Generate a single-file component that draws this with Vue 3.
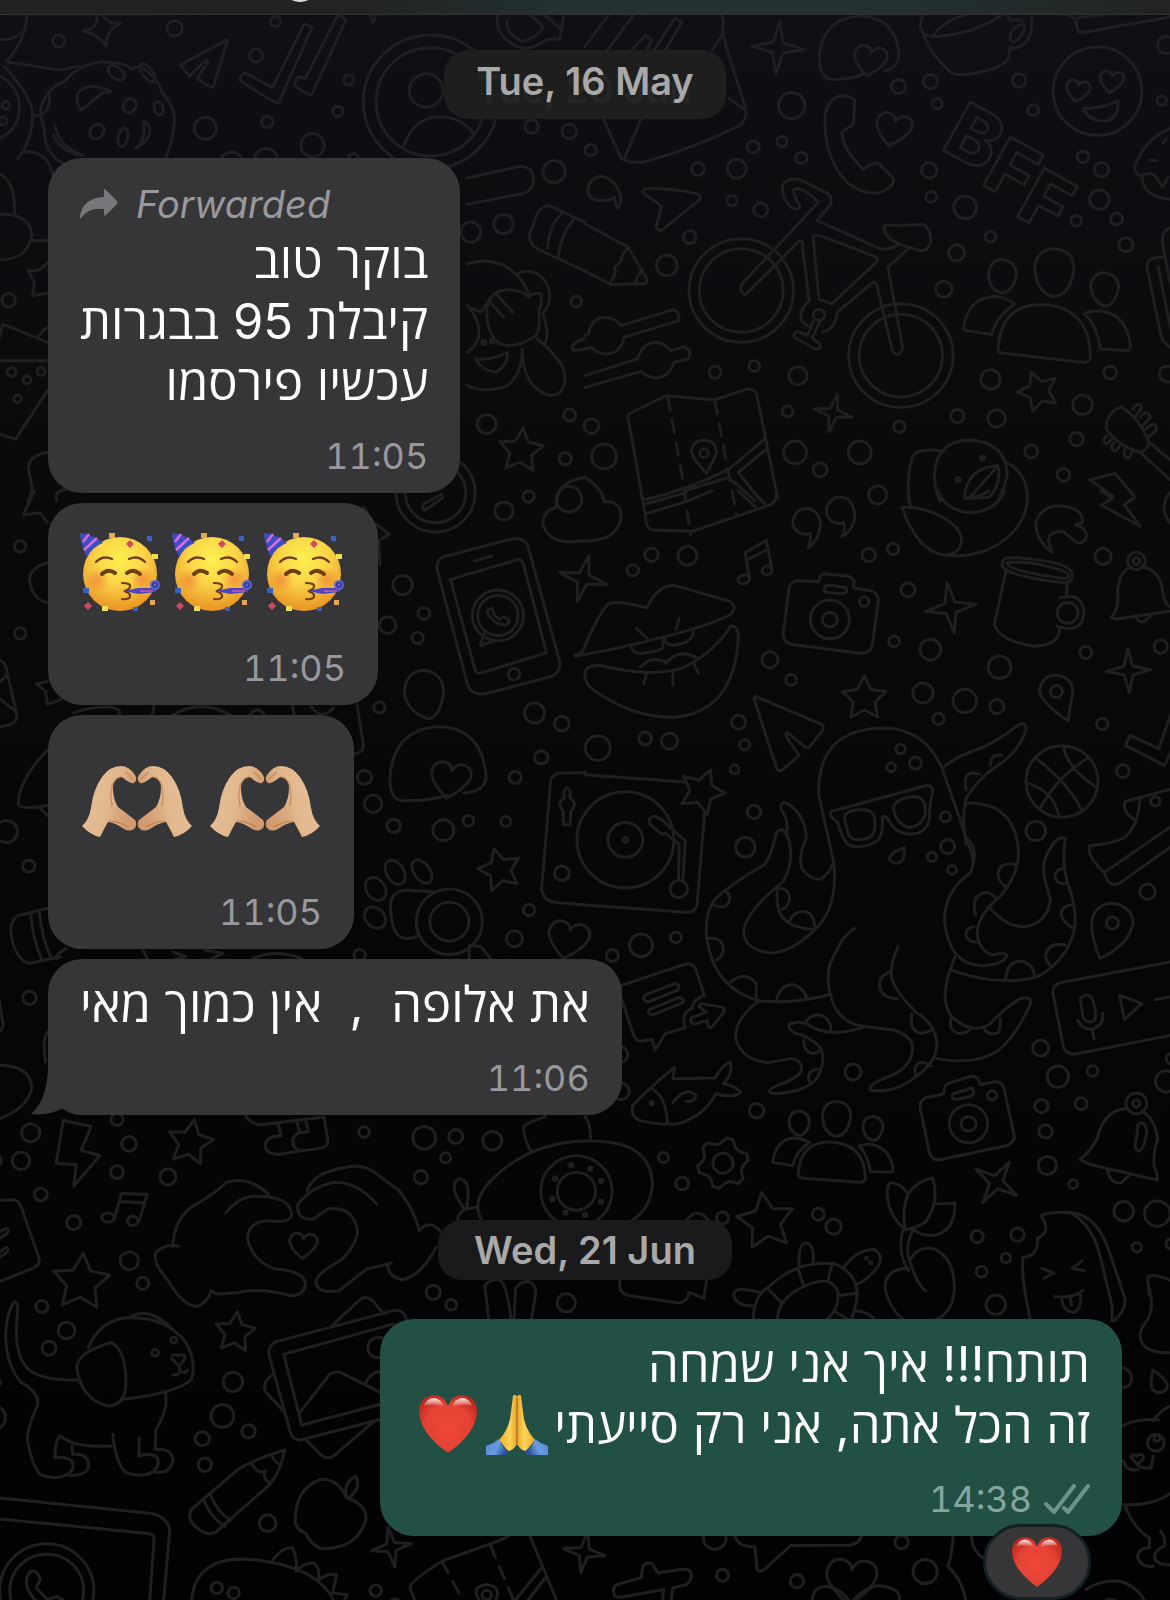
<template>
  <div class="chat-page">
    <!-- WALLPAPER -->
    <svg class="wallpaper" viewBox="0 0 1170 1600" preserveAspectRatio="xMidYMin slice" aria-hidden="true">
      <defs>
        <radialGradient id="faceFill" cx="0.5" cy="0.3" r="0.72">
          <stop offset="0" stop-color="#fdf04f" /><stop offset="0.45" stop-color="#fbd548" /><stop offset="1" stop-color="#e88f22" />
        </radialGradient>
        <radialGradient id="blush">
          <stop offset="0" stop-color="#f0803a" stop-opacity="0.7" /><stop offset="1" stop-color="#f0803a" stop-opacity="0" />
        </radialGradient>
        <linearGradient id="skin" x1="0" y1="0" x2="1" y2="0.4">
          <stop offset="0" stop-color="#e8c39b" /><stop offset="0.6" stop-color="#e2b88d" /><stop offset="1" stop-color="#d29a6f" />
        </linearGradient>
        <radialGradient id="heartFill" cx="0.5" cy="0.55" r="0.6">
          <stop offset="0" stop-color="#f0483a" /><stop offset="0.65" stop-color="#e34234" /><stop offset="1" stop-color="#c1281d" />
        </radialGradient>
        <linearGradient id="heartShine" x1="0" y1="0" x2="0" y2="1">
          <stop offset="0" stop-color="#fff" stop-opacity="0.9" /><stop offset="1" stop-color="#fff" stop-opacity="0" />
        </linearGradient>
        <linearGradient id="palm" x1="0" y1="0" x2="1" y2="0">
          <stop offset="0" stop-color="#f0a92c" /><stop offset="0.6" stop-color="#fdd458" /><stop offset="1" stop-color="#e9a52f" />
        </linearGradient>
        <linearGradient id="sleeve" x1="0" y1="0" x2="1" y2="0.4">
          <stop offset="0" stop-color="#4f86cf" /><stop offset="0.6" stop-color="#6a9be0" /><stop offset="1" stop-color="#2d4f94" />
        </linearGradient>

        <symbol id="party" viewBox="0 0 82 80">
          <circle cx="40" cy="42" r="37" fill="url(#faceFill)" />
          <circle cx="17" cy="48" r="12" fill="url(#blush)" />
          <circle cx="62" cy="47" r="12" fill="url(#blush)" />
          <path d="M0 1Q13 2 23 11Q12 15 7 25Q1 14 0 1Z" fill="#3d4fc0" />
          <path d="M3 10L9 2M4 18L17 6" fill="none" stroke="#d86be0" stroke-width="2.5" />
          <path d="M16 30Q23 23 32 27M49 27Q58 23 65 30" fill="none" stroke="#70400a" stroke-width="2.4" stroke-linecap="round" />
          <path d="M22 42Q28 36 35 41M47 41Q53 36 60 42" fill="none" stroke="#70400a" stroke-width="4" stroke-linecap="round" />
          <path d="M42 51Q51 51 50 55Q49 58 44 59Q51 61 50 65Q48 68 42 67" fill="none" stroke="#70400a" stroke-width="2.2" stroke-linecap="round" />
          <path d="M44 59L58 56L76 56L76 60L58 62Z" fill="#4a45c4" />
          <path d="M60 59H73" stroke="#c65aa0" stroke-width="1.6" />
          <circle cx="75" cy="53" r="5" fill="#5b6ad0" /><circle cx="75" cy="53" r="2.4" fill="none" stroke="#3b2f9c" stroke-width="1.4" />
          <path d="M29 1h6v5h-6zM70 68h5v5h-5z" fill="#e6a657" />
          <path d="M50 8l4 4l-4 4l-4 -4zM8 70l4 4l-4 4l-4 -4z" fill="#cf4a62" />
          <path d="M67 4h5v5h-5zM3 56h6v5h-6zM53 75h5v4h-5z" fill="#3b62bd" />
          <path d="M72 22h6v5h-6zM22 74h6v5h-6z" fill="#ecdf57" />
        </symbol>

        <symbol id="half-heart-hand" viewBox="0 0 55 72">
          <path d="M0 60Q7 54 9 42Q11 24 20 11Q28 0 39 0Q47 0 53 9Q56 14 52 17Q48 18 40 11Q31 12 31 22Q31 33 36 41Q44 47 53 54Q56 59 52 63Q48 66 42 63Q34 57 26 56Q22 63 18 71Q8 69 0 60Z" fill="url(#skin)" />
          <path d="M39 11Q32 12 30 21Q28 30 30 40M27 55Q36 55 46 61M43 6Q48 9 51 14" fill="none" stroke="#b57248" stroke-width="1.3" opacity="0.6" />
        </symbol>

        <symbol id="heart-hands" viewBox="0 0 110 72">
          <use href="#half-heart-hand" width="55" height="72" />
          <use href="#half-heart-hand" width="55" height="72" transform="translate(110 0) scale(-1 1)" />
        </symbol>

        <symbol id="red-heart" viewBox="0 0 58 58">
          <path d="M29 58Q0 37 0 16Q1 1 15 0Q25 0 29 11Q33 0 43 0Q57 1 58 16Q58 37 29 58Z" fill="url(#heartFill)" />
          <path d="M5 11Q8 3 15 3Q23 4 25 12Q14 8 5 11ZM53 11Q50 3 43 3Q35 4 33 12Q44 8 53 11Z" fill="url(#heartShine)" />
        </symbol>

        <symbol id="half-pray" viewBox="0 0 31 61">
          <path d="M27 2Q28 0 29 1L31 2V50Q27 57 22 57L13 46Q24 34 25 18Z" fill="url(#palm)" />
          <path d="M31 4V50" stroke="#9a5b10" stroke-width="1" />
          <path d="M0 52Q7 50 13 45Q16 54 23 57L21 61H0Z" fill="url(#sleeve)" />
        </symbol>

        <symbol id="pray" viewBox="0 0 62 61">
          <use href="#half-pray" width="31" height="61" />
          <use href="#half-pray" width="31" height="61" transform="translate(62 0) scale(-1 1)" />
        </symbol>
      </defs>

      <g v-for="(t, i) in tiles" :key="i" class="doodle" :transform="`translate(${t.x} ${t.y}) scale(0.3731 0.3333)`">
        <ellipse v-for="(c, j) in t.dots" :key="'c' + j" :cx="c[0]" :cy="c[1]" :rx="c[2] * 0.9" :ry="c[2]" />
        <ellipse v-for="(e, j) in t.ovals || []" :key="'e' + j" :rx="e[2]" :ry="e[3]" :transform="`translate(${e[0]} ${e[1]}) rotate(${e[4]})`" />
        <path v-for="(s, j) in t.stars || []" :key="'s' + j" :d="burst(s[0], s[1], s[2], s[3], 5, 0.5)" />
        <path v-for="(s, j) in t.sparkles || []" :key="'k' + j" :d="burst(s[0], s[1], s[2], s[3], 4, 0.28)" />
        <path v-for="(h, j) in t.hearts || []" :key="'h' + j" :d="heartPath" :transform="`translate(${h[0]} ${h[1]}) rotate(${h[3]}) scale(${h[2] / 50})`" />
        <path v-for="(d, j) in t.paths" :key="'p' + j" :d="d" />
        <path v-for="(d, j) in t.dashed || []" :key="'d' + j" class="dashed" :d="d" />
      </g>
      <g class="doodle doodle-text">
        <text transform="translate(939 148) rotate(29)">B</text>
        <text transform="translate(979 183) rotate(29)">F</text>
        <text transform="translate(1013 214) rotate(29)">F</text>
      </g>
    </svg>

    <!-- HEADER -->
    <header class="top-bar"><span class="avatar"></span></header>

    <!-- CHAT -->
    <main class="chat">
      <div class="date-pill first">
        <span class="date-ghost" aria-hidden="true">Tue, 20 Jun</span>
        <span class="date-text">Tue, 16 May</span>
      </div>

      <div class="bubble forwarded-bubble">
        <div class="forwarded">
          <svg class="forward-icon" viewBox="0 0 38 30" aria-hidden="true">
            <path d="M24 1Q24 -1 26 1L37 12Q38 13.500 37 15L26 26Q24 28 24 25V20Q9 18 1 29Q-1 30 0 27Q3 9 24 8Z" />
          </svg>
          <span>Forwarded</span>
        </div>
        <p v-for="line in forwardedLines" :key="line" class="text" dir="rtl">{{ line }}</p>
        <time class="time">11:05</time>
      </div>

      <div class="bubble">
        <div class="emoji-row party-row">
          <svg v-for="n in 3" :key="n" class="party" role="img" aria-label="🥳"><use href="#party" /></svg>
        </div>
        <time class="time">11:05</time>
      </div>

      <div class="bubble">
        <div class="emoji-row hands-row">
          <svg v-for="n in 2" :key="n" class="hands" role="img" aria-label="🫶🏼"><use href="#heart-hands" /></svg>
        </div>
        <time class="time">11:05</time>
      </div>

      <div class="bubble with-tail">
        <p class="text" dir="rtl">{{ praise }}</p>
        <time class="time">11:06</time>
        <svg class="tail" viewBox="0 0 40 50" aria-hidden="true"><path d="M17 0Q17 34 0 49Q18 51 32 43L40 20Z" /></svg>
      </div>

      <div class="date-pill second"><span class="date-text">Wed, 21 Jun</span></div>

      <div class="bubble outgoing">
        <p class="text" dir="rtl">תותח!!! איך אני שמחה</p>
        <p class="text" dir="rtl">זה הכל אתה, אני רק סייעתי<svg class="pray" role="img" aria-label="🙏"><use href="#pray" /></svg><svg class="heart" role="img" aria-label="❤️"><use href="#red-heart" /></svg></p>
        <div class="time">
          <time>14:38</time>
          <svg class="ticks" viewBox="0 0 46 30" aria-hidden="true"><path d="M2 20L10 28L30 2M20 24L24 28L44 2" /></svg>
        </div>
        <button class="reaction" type="button" aria-label="❤️"><svg><use href="#red-heart" /></svg></button>
      </div>
    </main>
  </div>
</template>

<script setup>
const forwardedLines = ['בוקר טוב', 'קיבלת 95 בבגרות', 'עכשיו פירסמו'];
const praise = 'את אלופה  ,  אין כמוך מאי';

const heartPath = 'M0 46Q-45 8 -44 -16Q-40 -46 -16 -42Q-2 -38 0 -24Q8 -44 24 -42Q46 -38 44 -12Q38 14 0 46Z';

// pointed shape with n tips: five for a star, four for a sparkle
function burst(x, y, r, rot, n, inner) {
  const pts = [];
  for (let i = 0; i < n * 2; i++) {
    const a = (rot - 90 + (i * 180) / n) * Math.PI / 180;
    const d = i % 2 ? r * inner : r;
    pts.push(`${(x + Math.cos(a) * d * 0.9).toFixed(1)} ${(y + Math.sin(a) * d).toFixed(1)}`);
  }
  return 'M' + pts.join('L') + 'Z';
}

function gear(x, y, r) {
  const pts = [];
  for (let i = 0; i < 24; i++) {
    const a = (i * 15 - 82) * Math.PI / 180;
    const d = i % 4 < 2 ? r : r * 0.78;
    pts.push(`${(x + Math.cos(a) * d * 0.9).toFixed(1)} ${(y + Math.sin(a) * d).toFixed(1)}`);
  }
  return 'M' + pts.join('L') + 'Z';
}

const tiles = [
  {
    x: 0, y: 0,
    dots: [[160, 123, 18], [470, 85, 23], [740, 65, 15], [688, 166, 20], [936, 239, 15], [907, 333, 15], [718, 365, 17], [552, 384, 33], [839, 435, 35], [1425, 379, 20], [1526, 393, 22], [1485, 514, 33], [1350, 671, 29], [1262, 695, 30], [26, 899, 20], [19, 315, 11], [11, 362, 12], [34, 1114, 13], [75, 1137, 12], [113, 1112, 12], [50, 1194, 11], [1305, 1270, 28], [1527, 1243, 18], [1515, 1374, 18], [1545, 903, 16], [1143, 271, 50], [1155, 305, 200], [1155, 305, 162], [715, 480, 35], [622, 490, 35], [948, 475, 15], [1525, 1495, 38], [1297, 1025, 6], [1320, 1022, 6]],
    ovals: [[350, 317, 17, 22, 20], [427, 324, 12, 20, -15], [262, 394, 18, 23, 30], [332, 412, 13, 28, 10], [314, 218, 26, 16, 45], [398, 218, 32, 14, 55]],
    stars: [[1397, 1350, 68, 5]],
    paths: [
      'M75 44Q72 120 20 185M0 118Q40 122 62 95M20 185L165 210L215 198M15 200Q90 290 90 345Q90 420 50 475M0 225Q55 260 55 320Q55 390 0 415',
      'M90 345H112M70 455Q130 450 145 525M0 520Q45 540 42 645M0 642Q85 640 88 705Q75 780 0 778M88 720H130',
      'M125 290Q150 250 175 245Q215 190 275 186Q330 185 355 205L380 198Q430 240 435 275Q470 320 470 360Q465 430 445 473M125 290Q100 330 122 385Q118 460 180 495M135 280Q140 330 112 345M150 375Q160 440 225 465Q170 460 145 405M388 360Q430 400 365 445Q395 420 388 360M300 275L275 280L220 330Q195 285 225 265Q260 250 300 275Z',
      'M262 44Q268 85 225 92Q265 103 287 138Q287 90 325 70Q290 72 277 44',
      'M608 120Q613 118 611 125L573 262Q570 265 530 235L560 185Q555 175 545 190L510 228L485 195Z',
      'M658 218L732 262L815 75Q820 70 838 82L748 308Q742 314 645 240Q645 225 658 218ZM800 230L820 235L905 48Q915 46 928 60L837 283Q832 290 790 255Z',
      'M992 44L1000 70L1010 44M1335 44Q1325 90 1360 120Q1400 160 1440 135Q1470 110 1500 120L1512 44M1360 60Q1350 95 1400 125Q1450 105 1455 80Q1440 60 1420 44M1460 44L1505 90',
      'M1082 440Q1110 350 1180 350Q1235 350 1270 400M1253 533L1395 498Q1430 500 1430 540Q1430 570 1400 580L1253 612',
      'M1568 665L1475 617Q1455 612 1440 640L1420 700Q1415 725 1440 745L1568 812M1505 640Q1470 680 1468 745M1540 655Q1505 695 1497 765',
      'M1253 790Q1310 770 1360 800Q1400 830 1420 885Q1435 875 1450 880Q1455 900 1445 930Q1450 1000 1430 1010Q1380 1045 1340 1030Q1305 1000 1305 930Q1310 880 1345 870Q1385 860 1420 890M1385 820Q1430 800 1460 840Q1490 890 1455 940Q1475 1000 1460 1030M1400 1045Q1400 1130 1440 1165Q1480 1200 1505 1170Q1530 1120 1490 1070Q1470 1040 1440 1015M1400 1045Q1400 1120 1360 1155Q1300 1180 1253 1155M1253 915Q1290 960 1283 1010Q1275 1040 1253 1055M1275 1075Q1320 1080 1360 1055Q1365 1090 1330 1115Q1290 1110 1275 1075ZM1310 900L1350 950M1330 880L1375 935M1258 920L1290 935L1310 900',
      'M130 785Q110 820 78 808L95 845L90 885L130 878M0 1015L10 970L130 1025M0 1080H130M0 1300L45 1315L130 1170M105 1010Q115 990 130 980M130 1355Q85 1360 78 1400L90 1465L78 1500M155 1500Q145 1470 180 1465',
      'M1568 1015Q1520 1030 1540 1050L1568 1045',
    ],
  },
  {
    x: 585, y: 0,
    dots: [[839, 259, 21], [924, 244, 21], [942, 311, 15], [1161, 241, 20], [1199, 330, 16], [553, 316, 39], [450, 440, 18], [527, 424, 15], [579, 473, 17], [302, 506, 19], [406, 505, 28], [15, 450, 17], [393, 601, 15], [470, 629, 21], [280, 710, 19], [219, 795, 31], [921, 510, 23], [926, 590, 16], [1017, 621, 34], [1085, 709, 16], [994, 757, 24], [960, 866, 24], [1332, 470, 17], [1382, 508, 21], [1376, 598, 29], [1314, 661, 16], [1422, 656, 18], [1447, 733, 21], [1555, 135, 26], [1543, 301, 14], [1371, 273, 132], [348, 1115, 18], [453, 1096, 16], [570, 1125, 27], [1085, 1136, 29], [1405, 1116, 19], [1558, 1120, 24], [1331, 1212, 29], [996, 1246, 20], [1101, 1253, 26], [542, 1232, 16], [562, 1355, 34], [735, 1355, 34], [629, 1407, 21], [841, 1278, 17], [17, 1276, 22], [51, 1367, 37], [1315, 1315, 20], [1194, 1352, 19], [1280, 1422, 19], [1064, 1371, 6], [998, 1437, 6], [626, 943, 17], [418, 870, 155], [418, 870, 125], [845, 1065, 155], [845, 1065, 124], [318, 1357, 13]],
    stars: [[1213, 1172, 62, -20]],
    sparkles: [[516, 143, 78, 4], [664, 1237, 58, 12]],
    hearts: [[762, 182, 50, 10], [824, 388, 54, 14], [1318, 272, 36, 10], [1408, 245, 36, 8]],
    paths: [
      'M0 140Q30 90 65 44M60 150L130 44M365 44Q375 70 365 110L340 150M370 100L380 150L430 325Q435 355 415 375Q300 440 160 485Q110 490 95 470L50 357M105 475L150 357M385 295L430 330M125 150L162 105L178 120L165 150M185 150L240 55L260 65L215 150',
      'M800 212Q840 205 840 160Q830 50 735 48Q640 55 627 160Q625 240 665 238Q720 238 750 218',
      'M905 44Q880 105 935 110Q1050 100 1115 44M930 108Q960 60 1020 44M905 105Q930 170 980 218Q1010 230 1060 215Q1120 200 1132 175L1138 140M1132 44Q1138 70 1145 60Q1180 55 1175 90Q1150 145 1136 115Q1140 80 1165 75M1195 44Q1200 145 1138 145',
      'M1290 44L1310 55L1320 95Q1330 100 1345 95L1568 50M1310 55L1390 44',
      'M1332 325Q1380 325 1425 303Q1430 350 1395 362Q1350 365 1332 325Z',
      'M722 300Q700 280 675 290Q640 310 642 360Q640 470 700 545Q750 590 795 575Q830 555 825 535L785 488Q770 485 745 508Q690 450 687 395L718 372Z',
      'M158 565Q150 575 165 585L205 618L190 680Q195 692 205 690L305 600Q315 590 300 580Q230 563 158 565ZM35 600Q5 595 8 565Q15 530 45 528Q90 540 97 600L88 625Q80 610 78 590Q65 605 35 600Z',
      'M0 670L115 740L165 835Q168 850 155 850L70 852L0 812M115 742Q105 752 98 770Q100 785 80 800Q85 825 65 848M155 808Q140 820 133 850',
      'M625 605L420 850Q410 875 430 882L575 720Q585 720 582 740L600 900M625 605Q570 550 558 570Q560 590 575 615Q570 635 550 620Q515 570 535 545Q555 530 580 540L650 580Q665 595 655 615L620 660L790 745Q810 750 835 735M610 710Q615 700 640 710L780 770Q785 780 775 790L660 910L626 896Z',
      'M865 745L810 800L850 1040Q845 1065 830 1060Q822 1055 820 1040L780 850Q770 840 760 855L675 935Q670 985 635 995M600 900Q570 930 580 960Q590 975 605 980M800 680Q795 672 830 675L905 672Q925 685 925 720Q920 755 895 750L850 735Q800 715 800 680ZM610 965L595 1005L570 992Q555 1000 560 1010L615 1045Q635 1045 628 1030L608 1012L630 960',
      'M0 1005L10 1000Q15 950 55 950Q85 955 95 975L235 928Q255 930 250 960L105 1010Q95 1060 55 1060Q30 1058 18 1040L0 1045M0 1125L140 1075Q155 1025 190 1025Q215 1030 230 1050L265 1038Q290 1050 275 1075L238 1085Q225 1130 190 1132Q165 1130 150 1112L0 1160',
      'M1255 745Q1310 750 1308 810Q1295 890 1250 888Q1205 870 1203 800Q1210 745 1255 745ZM1105 1050Q1110 910 1225 912Q1350 920 1352 1070Q1350 1088 1330 1085L1120 1058Q1102 1055 1105 1050ZM1115 777Q1160 785 1153 830Q1140 878 1112 878Q1080 865 1079 820Q1085 777 1115 777ZM1012 985Q1025 890 1095 888Q1130 890 1150 912Q1100 945 1088 1002L1018 990ZM1390 817Q1430 825 1427 865Q1415 918 1388 917Q1355 900 1353 855Q1360 815 1390 817ZM1335 940Q1350 930 1385 932Q1450 945 1459 1035Q1460 1052 1445 1050L1378 1045Q1370 970 1335 940Z',
      'M155 1500L115 1250Q115 1240 125 1235L218 1185L345 1198L435 1165Q458 1165 460 1185L515 1490M155 1498Q280 1465 385 1405L480 1315M270 1468L385 1430L455 1500M485 1345L410 1415L470 1500M325 1418Q285 1370 285 1350Q290 1318 320 1318Q352 1322 352 1355Q348 1370 325 1418Z',
      'M865 1500Q860 1350 900 1350Q930 1345 960 1352M950 1500Q935 1470 935 1420Q940 1320 1030 1318Q1125 1325 1130 1420Q1120 1470 1105 1500M1130 1385Q1185 1420 1184 1500M1015 1493Q1020 1400 1105 1395Q1115 1450 1080 1490ZM1105 1395L1030 1490',
      'M1435 1218Q1390 1240 1395 1285Q1420 1330 1485 1355Q1510 1345 1508 1320Q1480 1250 1435 1218ZM1485 1355L1568 1440M1510 1325L1568 1380M1465 1225Q1480 1200 1490 1220L1475 1245M1485 1250Q1505 1220 1512 1250L1492 1275M1500 1285Q1530 1255 1528 1290L1505 1310M1395 1305Q1380 1320 1395 1330L1410 1315M1415 1325Q1400 1345 1420 1350L1430 1335M1445 1345Q1435 1370 1455 1372L1465 1352',
      'M1400 1500L1412 1485L1350 1437L1418 1418L1470 1487L1460 1500',
      'M1568 385Q1500 410 1470 500Q1475 530 1490 525Q1520 510 1530 535L1545 560L1560 530M1490 527Q1490 590 1568 597M1510 480H1530M1545 430L1555 415M1568 682Q1540 690 1545 730L1568 860M1550 768L1515 775Q1500 785 1505 810L1540 1000Q1545 1030 1568 1040M1533 800L1568 990',
    ],
    dashed: ['M222 1190L262 1440L282 1600', 'M347 1200L405 1540'],
  },
  {
    x: 0, y: 490,
    dots: [[57, 166, 17], [57, 427, 17], [1080, 282, 29], [1351, 60, 27], [1417, 17, 17], [1137, 367, 18], [1040, 402, 25], [1120, 440, 17], [1018, 648, 17], [1433, 665, 30], [1506, 697, 22], [1451, 798, 20], [1381, 858, 18], [978, 858, 21], [1001, 937, 26], [1056, 1003, 20], [1189, 1016, 31], [1256, 988, 16], [1356, 990, 15], [80, 1123, 18], [20, 1020, 33], [1418, 1255, 17], [1379, 1341, 24], [965, 1390, 17], [1335, 373, 76], [1335, 373, 60], [1378, 549, 17], [1205, 1290, 98], [1205, 1290, 58], [1168, 5, 118], [1168, 5, 90], [1506, 1145, 22]],
    ovals: [[1060, 1142, 24, 38, -25], [1132, 1140, 22, 38, -30], [1008, 1192, 26, 36, -25], [1006, 1278, 26, 34, -30]],
    stars: [[1340, 1135, 66, -15]],
    hearts: [[1207, 866, 60, 10], [1522, 1345, 62, 12]],
    paths: [
      'M1172 235Q1170 205 1190 197L1375 143Q1405 140 1415 165L1500 510Q1505 540 1480 555L1300 608Q1265 612 1255 585ZM1208 265L1390 205Q1398 205 1402 215L1465 485L1290 545Q1280 548 1275 540ZM1272 210L1318 195M1300 420L1288 463L1325 450M1320 352Q1300 355 1312 375Q1330 400 1355 402Q1370 395 1362 382L1348 378L1340 385L1325 372Z',
      'M1185 10L1135 40Q1130 50 1140 58L1188 20M1568 -40Q1490 -30 1490 50Q1455 60 1455 100Q1470 150 1520 152L1568 150',
      'M1137 537Q1190 545 1190 605Q1180 680 1147 682Q1090 660 1084 600Q1090 540 1137 537ZM1245 905Q1305 900 1303 850Q1290 705 1172 706Q1055 715 1046 860Q1045 930 1085 928Q1150 928 1200 912',
      'M1160 1200L1090 1195Q1045 1200 1048 1250Q1050 1340 1090 1340Q1115 1340 1122 1330M1260 1360L1290 1365L1315 1400M1258 1365V1400',
      'M975 50Q985 55 990 85L1045 130L1015 150L1020 220M130 775Q50 870 52 940Q60 955 130 942M110 950L130 972M130 1250L50 1272Q30 1290 32 1320Q40 1400 80 1415L165 1395M85 1265Q90 1340 115 1405M108 1260Q115 1340 140 1400',
      'M0 505Q20 515 22 545L48 670Q50 690 30 700L0 708M0 620L45 660M0 575L22 550M130 570L100 578L125 600L130 640L165 625M130 215Q80 230 82 270Q90 325 130 335M95 0L65 72L110 65L130 95',
      'M200 665Q240 645 300 647Q330 655 322 672M410 672L415 645M465 672Q540 620 620 672M670 672Q690 640 712 672M785 645L790 672M835 645Q860 690 895 650M958 640L975 760Q975 785 950 788M465 1380L500 1395L475 1400M550 1375L600 1385L570 1400M680 1400Q740 1370 810 1400M385 1375L397 1400M155 1400Q150 1390 180 1370',
      'M1568 843L1500 845Q1478 850 1476 870L1452 1190Q1455 1225 1485 1232L1568 1240M1512 900V920Q1490 935 1510 960V1000H1528L1530 960Q1550 935 1528 920V900Q1520 880 1512 900Z',
    ],
  },
  {
    x: 585, y: 490,
    dots: [[128, 238, 17], [178, 191, 20], [274, 194, 28], [759, 192, 20], [824, 174, 17], [864, 296, 21], [827, 451, 16], [924, 475, 31], [1109, 528, 34], [904, 605, 30], [1016, 629, 35], [1102, 646, 21], [946, 683, 17], [495, 506, 24], [551, 566, 16], [411, 693, 21], [427, 760, 15], [400, 834, 13], [161, 741, 19], [226, 749, 24], [34, 770, 37], [452, 961, 20], [429, 1067, 29], [1386, 196, 24], [1340, 484, 18], [1540, 466, 20], [1384, 698, 17], [1439, 839, 19], [1206, 1018, 29], [1505, 1200, 23], [1411, 1294, 18], [150, 1361, 34], [243, 1337, 16], [73, 1391, 18], [844, 773, 14], [884, 815, 18], [819, 828, 13], [964, 976, 15], [970, 1065, 21], [928, 1096, 14], [982, 1135, 13], [1261, 601, 18], [783, 12, 27], [1276, 870, 107], [1475, 210, 26], [1475, 210, 10], [655, 385, 58], [655, 385, 22], [747, 332, 14], [1291, 365, 31], [108, 1045, 144], [108, 1045, 52], [108, 1045, 7], [251, 1192, 26], [1526, 930, 14]],
    ovals: [[425, 265, 16, 13, -20], [487, 238, 13, 13, 0]],
    stars: [[747, 622, 68, 0], [312, 900, 70, 22]],
    sparkles: [[978, 350, 76, -8], [1454, 538, 66, -2], [-5, 262, 72, 14]],
    paths: [
      'M0 -40Q45 -10 52 32Q95 30 97 75Q90 150 0 150M150 0L165 100Q170 118 190 118L290 120L495 42Q515 35 512 0M160 40L270 5M165 68L275 30L340 0M410 0L455 48M450 0L480 38',
      'M590 130Q555 125 556 90Q565 50 595 52Q630 60 630 105Q625 150 597 170Q605 150 603 128ZM680 98Q645 92 646 55Q655 18 685 18Q720 25 722 75Q718 120 687 137Q698 120 692 95Z',
      'M440 260L428 185L485 148L500 235M432 207L490 175',
      'M848 50Q900 45 950 75Q1010 110 1007 150Q1005 190 960 192Q890 180 848 50ZM960 192Q1060 205 1130 140Q1190 80 1183 0M943 0Q970 65 1035 65Q1100 60 1122 0M870 45L865 0M1015 20Q1050 22 1080 0',
      'M1250 185Q1200 140 1207 90Q1225 40 1280 45Q1335 55 1330 95L1312 102Q1340 110 1343 135Q1335 160 1315 155L1280 122Q1240 120 1240 150Z',
      'M1380 0L1412 22L1380 42L1485 105L1443 42L1470 18L1460 0M1568 0Q1530 50 1568 100',
      'M-27 490Q-10 495 0 465Q30 380 60 340Q80 325 165 350Q195 280 240 283L385 330Q410 345 390 370Q330 405 200 440Q80 475 -27 495M0 560Q-5 520 40 523Q180 560 260 530Q340 490 390 405Q410 400 410 440Q400 660 240 678Q120 680 10 585Z',
      'M120 460Q130 490 150 487Q200 480 208 470L210 445M212 440Q215 462 235 462Q290 455 290 420M138 412L165 440M252 382L243 415M148 528Q180 490 218 515Q250 470 300 500M165 545L157 578M235 545V580M290 515L303 545',
      'M625 272L570 268Q548 270 545 295L530 430Q532 455 555 460L735 486Q762 487 768 465L785 325Q782 300 760 298L718 290L720 270Q715 258 700 255L640 248Q628 250 625 272ZM642 285Q635 303 650 305L690 308Q705 305 698 290L655 282Z',
      'M1120 205Q1130 195 1200 205Q1290 215 1303 245Q1308 275 1280 275Q1130 255 1115 225ZM1128 215Q1200 205 1290 245Q1300 265 1280 262Q1130 240 1128 215ZM1127 235L1095 400Q1110 450 1200 465Q1270 465 1270 410M1290 280L1287 318M1270 320Q1330 300 1335 365Q1330 430 1262 405',
      'M1460 228Q1425 245 1425 310Q1430 350 1408 378Q1410 385 1430 382L1568 360M1490 225Q1540 240 1545 300Q1550 340 1568 350M1475 378Q1490 410 1515 370',
      'M455 615L635 700Q640 710 635 718L600 768Q595 772 590 768L540 722Q535 728 540 738L573 793L525 838Q515 838 512 828L452 622Z',
      'M1292 688Q1215 630 1216 595Q1225 550 1262 552Q1305 560 1305 600ZM1568 665L1535 772L1458 732L1446 762L1550 822L1568 780M1205 800Q1290 870 1328 955M1280 765Q1290 830 1365 885M1345 800Q1260 860 1218 950M1185 875Q1255 900 1268 975',
      'M0 850L265 872M320 965L300 1235Q298 1262 270 1262L0 1240M250 1165L252 1058L215 1025L205 1028L175 1000Q165 985 180 975Q195 970 230 1010L268 1048L262 1165',
      'M625 910Q620 710 805 710Q910 715 955 830L1030 1070Q1045 1120 1030 1145Q960 1200 962 1290Q975 1425 1070 1422Q1125 1415 1128 1390Q1120 1380 1090 1390Q1045 1370 1050 1310Q1060 1260 1110 1215Q1160 1150 1160 1080Q1150 930 1020 935',
      'M625 910L665 1110Q680 1250 610 1320Q540 1390 490 1383Q420 1370 425 1310Q440 1250 530 1170Q565 1100 540 1030Q525 1000 510 1030Q500 1090 480 1120Q400 1170 350 1220Q320 1260 325 1330M540 1030Q545 980 525 955Q520 930 540 935Q590 970 592 1040Q570 1090 580 1130Q600 1165 630 1163Q650 1150 662 1120',
      'M955 830Q1000 790 1060 770Q1110 745 1160 700Q1180 690 1180 715Q1165 770 1120 810Q1050 860 1020 920Q1005 980 1020 1060M1080 1245Q1130 1310 1180 1305Q1240 1290 1245 1220Q1215 1130 1235 1090Q1260 1030 1285 1040Q1275 1110 1290 1170Q1320 1260 1308 1320Q1290 1400 1220 1450Q1180 1468 1130 1466',
      'M345 1240Q380 1260 388 1220Q385 1205 378 1200M330 1340Q370 1335 370 1375Q365 1400 350 1405M515 1190Q550 1190 547 1225Q540 1250 528 1252M515 1190Q505 1290 570 1305Q590 1315 615 1312M545 1290Q570 1245 600 1265Q615 1280 615 1312M1020 895Q1010 850 1035 845L1055 848M1085 820Q1085 785 1115 792M1150 1118Q1110 1110 1105 1145Q1105 1170 1125 1185M1045 1270Q1030 1210 1075 1202Q1095 1210 1100 1220M1040 1305Q1015 1310 1020 1335Q1030 1355 1050 1350M1280 1130Q1255 1135 1257 1160Q1270 1180 1285 1175M1300 1240Q1270 1245 1275 1275Q1290 1305 1308 1308M1285 1360Q1240 1350 1232 1390Q1235 1415 1245 1420M1125 1460Q1130 1410 1165 1408Q1200 1415 1203 1455M1025 1045Q1050 1070 1038 1120M722 1310Q690 1330 672 1380',
      'M658 960L915 882Q930 880 930 905Q925 915 922 960Q925 1010 890 1025Q840 1035 820 1000Q805 970 795 975Q800 1030 780 1050Q730 1080 700 1055Q685 1030 675 990Q650 975 658 960ZM695 985Q690 960 730 955Q775 950 775 985Q780 1035 750 1042Q715 1050 705 1030ZM825 950Q830 920 880 915Q915 915 910 970Q900 1005 865 1008Q830 995 825 950ZM853 1068Q860 1115 830 1115Q800 1105 830 1080Z',
      'M1568 893L1445 930Q1435 960 1470 985M1485 920Q1480 1010 1440 1040Q1400 1060 1350 1062Q1340 1090 1390 1145Q1400 1190 1430 1175L1568 1065M1390 1142L1568 1005M1378 1400Q1350 1330 1357 1280Q1370 1235 1412 1235Q1465 1245 1466 1295Q1455 1360 1378 1400Z',
    ],
  },
  {
    x: 0, y: 940,
    dots: [[82, 168, 20], [85, 572, 27], [59, 656, 26], [-8, 656, 16], [316, 532, 18], [348, 605, 22], [316, 690, 19], [452, 704, 24], [112, 757, 19], [200, 841, 21], [349, 955, 27], [385, 1023, 18], [1138, 587, 34], [1222, 583, 21], [1320, 596, 28], [1195, 647, 15], [1129, 705, 20], [977, 570, 16], [1545, 747, 106], [1545, 747, 57], [1531, 669, 5], [1488, 709, 5], [1481, 770, 5], [1516, 811, 5], [1162, 1050, 21], [1210, 1087, 16], [1518, 1081, 27]],
    ovals: [[292, 826, 17, 14, 0], [358, 836, 14, 14, 0]],
    stars: [[512, 602, 70, 10], [220, 1020, 88, 4]],
    hearts: [[814, 910, 42, 4]],
    paths: [
      'M0 370Q85 370 88 440Q75 500 0 530M0 170L12 250Q5 270 0 272M130 270Q115 290 125 360M172 535L247 553L220 625L270 640L200 732L207 668L153 663ZM310 825L328 753L397 757L375 835M322 778L390 782',
      'M660 520Q670 545 700 548L870 525L880 600Q878 615 860 618L745 637Q710 635 713 605Q720 580 755 582L748 545M795 535L805 570Q780 585 788 610Q795 625 810 625M820 532L828 568L805 572',
      'M465 912Q470 830 515 795Q570 760 610 720Q670 700 722 757M607 812Q640 765 680 762Q785 760 783 820Q775 845 720 835Q665 840 665 890Q680 960 740 980Q810 985 820 1020Q820 1060 780 1060Q700 1035 640 1050L585 1055L568 1045Q560 1080 530 1092Q490 1090 450 1010Q410 960 420 930Q450 900 480 912',
      'M825 745Q840 690 930 675Q980 665 1010 695L1070 745Q1110 800 1125 865Q1150 830 1180 865M1010 785Q960 720 900 720Q840 730 800 785Q795 835 840 830L880 800Q950 790 960 870Q945 940 890 970Q845 1000 848 1025Q860 1055 910 1045Q960 1000 985 980L1050 962M1040 965Q1040 1005 1080 1012Q1130 1000 1170 915',
      'M0 775L40 772Q55 778 60 795L108 950Q110 970 90 978L0 1018M0 870L20 858Q30 865 20 875L0 890M0 930L20 915Q30 925 15 935L0 945',
      'M1425 632Q1400 580 1405 550Q1420 540 1460 525V518M1568 597Q1430 600 1330 700Q1260 770 1290 832M1245 800Q1200 730 1230 710Q1265 710 1252 795M1278 795L1250 800Q1225 815 1228 832',
      'M1310 1130L1300 1030Q1310 1010 1340 1012Q1360 1030 1370 1130M1378 1130L1382 1040Q1395 1015 1420 1018Q1440 1030 1435 1060L1425 1130',
    ],
  },
  {
    x: 585, y: 940,
    dots: [[717, 390, 24], [459, 506, 22], [210, 646, 15], [260, 724, 19], [368, 827, 18], [624, 816, 18], [665, 853, 23], [1219, 318, 24], [1265, 404, 32], [1358, 387, 16], [1221, 492, 20], [1327, 485, 18], [1232, 568, 20], [1237, 670, 27], [1306, 726, 13], [1441, 807, 29], [1531, 814, 38], [1157, 877, 20], [1049, 883, 18], [1126, 947, 14], [1061, 988, 16], [1099, 1087, 29], [1476, 915, 14], [1568, 350, 15], [1555, 418, 32], [93, 338, 24], [96, 448, 25], [1026, 545, 57], [1026, 545, 22], [1089, 460, 14], [1475, 484, 31], [1475, 484, 11], [178, 483, 5], [369, 663, 30], [753, 948, 3], [765, 961, 3], [1568, 905, 15], [14, 680, 5], [43, 716, 5], [43, 778, 5], [0, 818, 5]],
    stars: [[484, 838, 88, -8]],
    sparkles: [[1100, 720, 72, 33]],
    paths: [
      gear(369, 663, 76),
      'M100 130Q90 140 93 155L130 280Q140 305 165 295L180 292L187 325L215 275L268 258Q255 215 285 200Q290 170 320 160L295 80Q285 60 265 68ZM160 160L240 125Q258 130 248 145L170 180Q150 178 160 160ZM172 203L250 167Q268 170 262 182L182 218Q165 218 172 203ZM285 228L325 210L305 195Q305 183 320 187L365 195Q375 200 372 210L340 255Q325 262 328 235L292 247Q278 240 285 228Z',
      'M128 490Q170 440 240 375L235 410L348 408Q370 365 390 360Q395 400 370 425Q400 430 417 450Q400 470 350 455Q320 520 250 545Q200 550 145 535Q120 520 128 490ZM180 440Q220 470 220 545M235 482Q270 430 297 460Q295 480 270 478',
      'M672 478Q712 482 711 525Q702 584 669 582Q637 570 635 520Q640 478 672 478ZM570 700Q574 598 657 600Q748 605 750 708Q748 722 735 720L580 708ZM573 507Q602 512 600 545Q592 580 572 580Q546 570 546 538Q550 507 573 507ZM502 660Q512 590 560 588Q585 590 601 602Q565 625 556 671ZM770 523Q799 528 797 557Q788 596 768 595Q744 583 743 550Q748 523 770 523ZM733 612Q750 605 765 607Q815 615 824 680Q825 690 815 690L764 688Q755 635 733 612Z',
      'M960 455L910 468Q893 478 897 500L922 635Q928 655 950 653L1130 610Q1150 600 1148 580L1120 435Q1112 417 1092 420L1058 428L1050 408Q1040 400 1025 405L970 425Q960 432 960 455ZM985 455Q978 475 995 472L1035 462Q1045 450 1035 438Z',
      'M1450 500Q1390 500 1370 590Q1350 630 1325 652Q1340 665 1400 680L1530 713Q1535 705 1522 670Q1520 630 1532 590Q1525 530 1490 508M1398 685Q1405 725 1435 722L1455 700M1480 545Q1500 535 1503 570Q1495 625 1482 627Q1465 620 1475 590Z',
      'M1568 60L1270 123Q1250 130 1252 155L1280 315Q1285 337 1310 337L1568 280M1325 170Q1350 145 1360 180Q1372 225 1360 238Q1340 245 1332 225ZM1318 235Q1330 262 1355 262Q1390 250 1385 215M1357 262L1362 290M1430 160L1490 185L1443 233ZM1525 173L1568 165',
      'M325 -20Q340 140 470 178L535 180Q600 175 655 158M672 30Q640 80 655 150Q670 240 740 252L830 265Q885 290 875 330Q870 375 820 400Q750 430 765 445Q830 455 890 400Q950 350 940 290Q930 240 890 215Q810 130 820 80Q825 40 838 15M980 85Q1060 118 1130 116M990 45Q930 200 1005 245Q1040 270 1080 250Q1120 200 1165 170Q1200 160 1190 190Q1150 290 1100 330Q1040 370 940 350M465 178Q400 230 403 290Q420 355 490 362L550 350Q585 355 578 390Q560 415 510 432Q480 450 505 455Q590 450 620 410Q650 350 625 310Q590 280 565 275Q535 255 550 245Q580 235 600 250Q650 290 750 255',
      'M590 240Q620 200 650 235Q660 250 657 270M585 295Q585 330 610 335L632 325M600 418Q590 385 625 382M875 215Q865 265 900 275L928 265M885 400Q875 365 905 360L925 372M980 225Q970 265 1000 275Q1020 275 1030 262M1068 260Q1080 285 1105 272Q1115 255 1110 230M820 90Q785 100 788 135Q795 170 835 170M390 120Q430 85 458 125V165M512 178Q520 130 555 128Q590 140 593 172',
      'M858 863Q810 820 808 750Q812 715 825 722Q850 730 865 755Q890 715 930 707Q950 780 910 840Q890 855 858 863Q845 810 865 755M935 785L990 783Q990 870 930 880Q900 880 880 862M850 865Q835 930 865 985M878 862Q850 920 875 975Q890 1030 912 1045M872 950Q890 910 935 920Q990 950 988 1040Q985 1110 940 1130M865 978Q800 980 803 1040Q815 1100 850 1130',
      'M450 1140Q450 1060 490 1035Q570 950 670 965Q740 1000 725 1085L710 1140M515 1140Q510 1070 590 1030Q660 995 677 1050Q680 1110 635 1140M490 1040L525 1080M570 980L585 1030M660 968L650 1015M675 1060L730 1052M665 1105L710 1135M573 970Q570 905 590 902Q615 905 610 960M692 975Q730 920 775 922Q800 940 785 970Q760 1010 728 1025M470 1050Q400 1030 398 1055Q400 1090 450 1090M725 1105Q760 1110 773 1130',
      'M0 597Q180 590 180 730Q175 800 125 835M0 525Q15 540 15 597M93 1014V1035Q95 1055 120 1060L250 1082Q275 1080 278 1050L318 1068L325 1014M272 834Q300 790 330 834',
      'M1220 820Q1245 805 1310 812Q1370 825 1400 920L1445 1070Q1445 1110 1415 1135M1300 812Q1360 850 1380 950L1410 1090V1135M1220 820Q1250 870 1210 888Q1215 940 1172 945Q1165 1000 1192 1135M1222 978L1255 992L1228 1007M1330 955L1303 978L1335 985M1257 1062Q1300 1070 1332 1045M1275 1068Q1280 1110 1310 1110Q1330 1095 1325 1055M1297 1065L1302 1088M1568 1015Q1520 990 1505 1005L1510 1060',
    ],
  },
  {
    x: 0, y: 1290,
    dots: [[115, 42, 18], [181, 114, 25], [134, 167, 21], [626, 268, 29], [598, 370, 34], [668, 416, 20], [544, 438, 21], [551, 516, 20], [719, 691, 25], [583, 885, 17], [628, 900, 17], [1008, 893, 17], [418, 181, 10], [468, 143, 9], [128, 893, 140], [128, 893, 110], [-5, 270, 10], [1305, 906, 14], [-15, 375, 36], [1060, 935, 17], [1015, 165, 31]],
    stars: [[632, 120, 62, 6]],
    sparkles: [[1050, 763, 60, -10]],
    paths: [
      'M215 262Q120 265 85 235Q40 200 48 80Q55 30 42 27Q20 60 18 130Q20 220 60 270Q110 300 103 340Q70 420 78 450Q90 520 110 545Q150 565 185 545Q210 520 190 500Q170 490 150 495Q150 440 165 430Q200 465 300 460M195 460L198 485Q240 480 240 520Q235 550 190 548M305 425Q310 500 335 535Q375 560 415 535Q435 510 420 490Q400 480 375 490V435M445 300Q455 350 420 410L418 470Q460 465 466 500Q460 545 418 538',
      'M240 165Q270 80 350 75Q450 75 500 150Q530 210 515 260Q480 300 335 320M350 75Q400 40 460 105M300 150Q340 170 340 270Q340 340 290 340Q220 320 208 225Q210 180 300 150ZM463 200Q460 180 480 190Q500 180 497 200L482 220ZM482 220L485 235Q480 250 465 247M485 235Q495 245 505 232',
      'M740 148L1060 53Q1085 55 1090 80M740 148Q720 160 722 185L780 420Q785 440 805 442L1022 380M1055 95L762 185L810 397L1022 335M805 360L885 245Q900 235 915 240L1022 300M980 275Q990 240 1022 235M735 245Q700 270 715 300L765 360M822 442L865 490Q880 500 895 490L1005 385M890 100L970 18Q985 10 1000 25L1030 65',
      'M765 472Q680 500 640 530L515 650Q500 680 535 710Q560 730 580 718L725 575Q755 530 765 472ZM550 625Q570 680 605 700M565 605Q585 660 620 682M675 510Q690 545 712 535Q705 560 725 570M730 487Q740 515 755 515',
      'M930 615Q905 555 860 560Q790 590 793 690Q800 715 820 720Q840 765 870 768Q960 765 982 680Q985 635 930 615ZM930 610Q920 570 955 550Q970 590 935 615',
      'M0 615L410 662Q455 675 457 715L440 930M0 678L400 722Q417 725 415 740L403 930M185 930L155 910L130 920L100 885L110 860Q105 830 85 835Q65 860 80 895Q90 915 105 930',
      'M515 930Q520 800 650 798Q850 810 900 930M730 805Q760 760 785 765Q800 800 795 835Q820 805 845 812Q860 830 855 862Q880 840 903 845L893 900L932 905L920 930',
      'M1115 930L1100 885Q1095 870 1185 805L1310 755Q1350 740 1365 728M1420 728L1495 930M1455 820L1375 930M1465 850L1410 930M1290 930Q1270 900 1280 885Q1305 865 1330 885Q1340 905 1325 930',
    ],
    dashed: ['M1185 805L1245 930', 'M1315 758L1380 930'],
  },
  {
    x: 585, y: 1290,
    dots: [[847, 748, 20], [368, 847, 18], [567, 865, 20], [910, 836, 36], [347, 735, 34], [1527, 450, 25], [1530, 437, 9]],
    sparkles: [[-2, 778, 62, 10]],
    hearts: [[712, 866, 76, 4]],
    paths: [
      'M400 728Q410 760 440 762H455L460 830Q465 840 480 830L550 758L710 757Q735 750 740 728M155 820Q160 808 180 812L195 840L265 828Q285 830 285 850Q280 878 260 878L235 885L230 930M155 820L150 855L85 875Q70 885 80 910Q95 915 110 910L210 890L207 930',
      'M608 930Q605 880 650 880Q690 890 710 930Q760 870 800 880Q850 890 840 930M985 728Q980 800 970 820Q1010 860 1020 930M1035 728Q1030 770 1070 800',
      'M1440 225Q1470 240 1460 270Q1455 285 1440 285M1520 232Q1505 290 1530 300Q1560 300 1558 275Q1550 255 1520 232ZM1510 -10Q1525 50 1500 90Q1470 130 1500 165Q1530 185 1568 180M1438 400Q1480 375 1535 382M1520 385Q1540 350 1568 340M1440 505Q1450 540 1480 530M1462 495Q1458 480 1475 490Q1495 478 1494 498L1478 515ZM1478 515Q1490 530 1515 525L1520 490M1440 635Q1520 640 1568 600',
      'M1445 640Q1470 710 1510 735V765Q1480 765 1478 795Q1490 825 1520 820M1540 715Q1555 740 1550 760Q1520 770 1525 800Q1540 820 1568 815M1340 890Q1380 860 1430 865Q1480 880 1500 930M1385 930Q1400 910 1430 930',
    ],
  },
];
</script>

<style>
body { margin: 0; background: #050507; }
</style>

<style scoped>
.chat-page { position: relative; min-height: 100vh; overflow: hidden; background: linear-gradient(180deg, #0f0f14 0%, #0a0a0c 28%, #060608 60%, #020204 100%); font-family: Inter, "Open Sans", "Liberation Sans", sans-serif; }
.wallpaper { position: absolute; inset: 0; width: 100%; height: 100%; }
.doodle { fill: none; stroke: #1f1f21; stroke-width: 3; stroke-linejoin: round; stroke-linecap: round; }
.doodle path, .doodle ellipse { vector-effect: non-scaling-stroke; }
.dashed { stroke-dasharray: 13 10; }
.doodle-text { font-size: 76px; font-weight: 800; }

/* HEADER */
.top-bar { position: relative; height: 14px; border-bottom: 1px solid #303233; background: linear-gradient(90deg, #212122 0%, #222424 32%, #233131 48%, #233030 78%, #222323 100%); overflow: hidden; }
.avatar { position: absolute; left: 24%; bottom: 12px; width: 38px; height: 38px; border-radius: 50%; background: #dcdcd2; }

/* CHAT */
.chat { position: relative; display: flex; flex-direction: column; align-items: flex-start; gap: 10px; padding: 35px 48px 67px; }
.date-pill { position: relative; align-self: center; border-radius: 24px; color: #a9a9aa; font-size: 38px; font-weight: 600; line-height: 60px; }
.date-pill.first { padding: 1px 32px 8px; margin-bottom: 29px; background: #1e1e1e; }
.date-pill.second { padding: 0 36px; margin: 95px 0 29px; background: #1a1a1c; }
.date-ghost { position: absolute; left: 32px; top: 9px; color: #262626; }
.date-text { position: relative; }

.bubble { position: relative; box-sizing: border-box; padding: 15px 32px 14px; border-radius: 34px; background: #363638; color: #fff; }
.forwarded-bubble { padding-top: 20px; }
.forwarded { display: flex; align-items: center; gap: 18px; color: #98989e; font-size: 38px; font-style: italic; line-height: 52px; }
.forward-icon { width: 38px; height: 30px; fill: #77777c; }
.text { height: 61px; margin: 0; font-size: 49px; line-height: 61px; white-space: pre; }
.time { display: flex; justify-content: flex-end; align-items: center; gap: 12px; margin-top: 20px; color: #98989e; font-size: 36px; line-height: 46px; font-variant-numeric: tabular-nums; }

.emoji-row { display: flex; }
.party-row { gap: 10px; padding: 14px 0 13px; }
.party { width: 82px; height: 80px; }
.hands-row { gap: 18px; padding: 36px 2px 31px; }
.hands { width: 110px; height: 72px; }

.tail { position: absolute; left: -17px; bottom: 0; width: 40px; height: 50px; fill: #363638; }

/* OUTGOING */
.outgoing { align-self: flex-end; background: #225045; }
.outgoing .time { color: #86a59e; }
.pray { width: 62px; height: 61px; margin: -12px 6px 0 0; vertical-align: -12px; }
.heart { width: 58px; height: 58px; margin: -12px 9px 0 7px; vertical-align: -10px; }
.ticks { width: 46px; height: 30px; fill: none; stroke: #6d948b; stroke-width: 4; stroke-linecap: round; stroke-linejoin: round; }
.reaction { position: absolute; right: 31px; bottom: -64px; display: flex; align-items: center; justify-content: center; width: 108px; height: 76px; padding: 0; border: 3px solid #142023; border-radius: 38px; background: #363638; }
.reaction svg { width: 50px; height: 50px; }
</style>
